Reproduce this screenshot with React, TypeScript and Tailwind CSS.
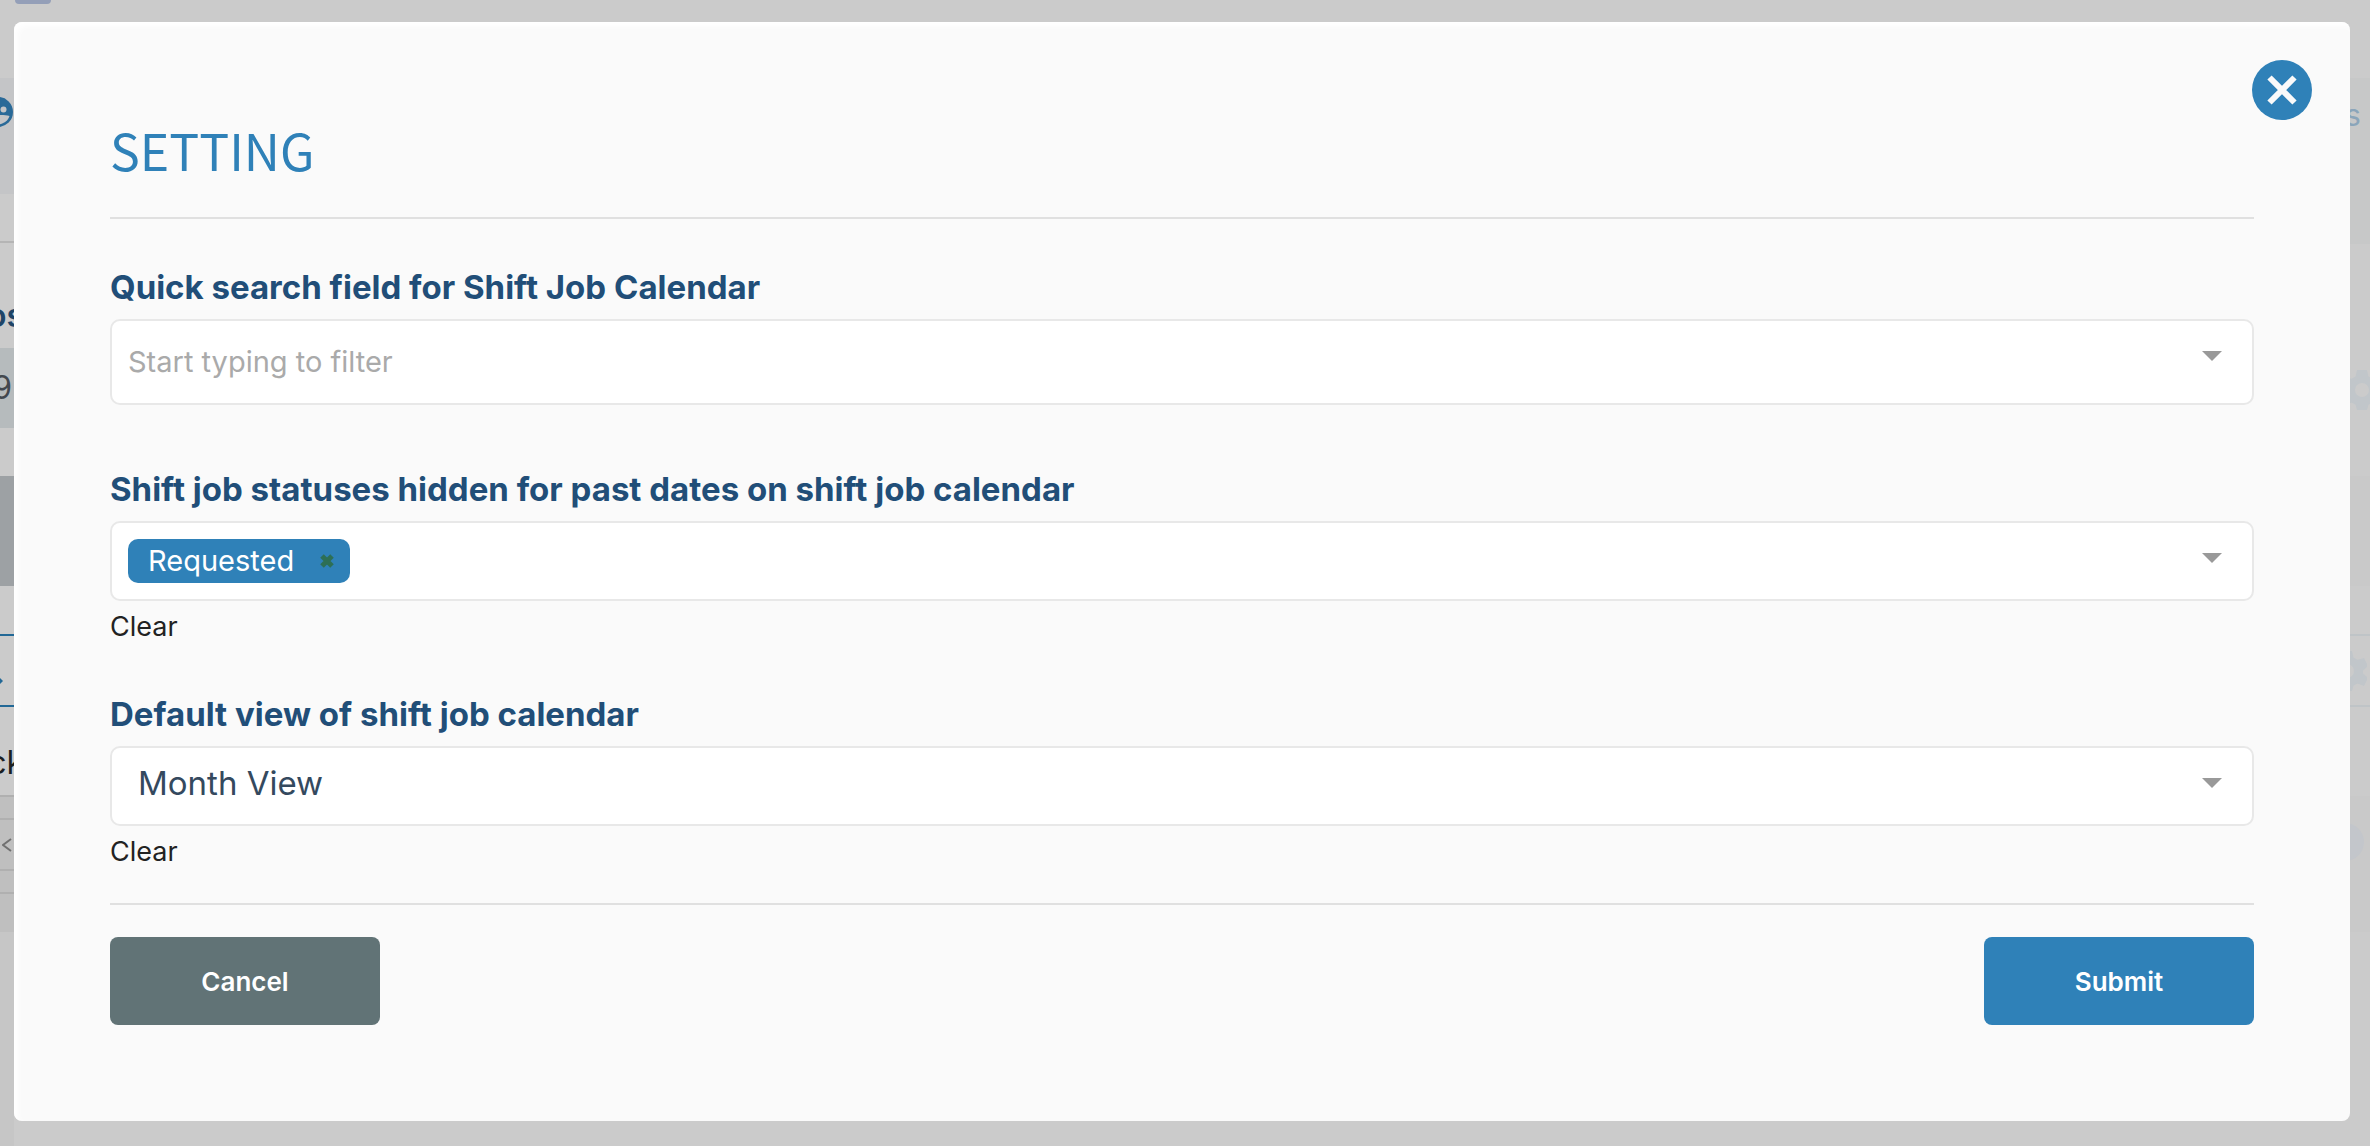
// App.tsx
import { FC, ReactNode, useState } from "react";

const viewOptions = [
  { value: "month", label: "Month View" },
  { value: "week", label: "Week View" },
  { value: "day", label: "Day View" },
];

const Caret: FC = () => (
  <svg className="pointer-events-none h-[10px] w-5 shrink-0 fill-[#999]" viewBox="0 0 20 10" aria-hidden="true">
    <path d="M0 0h20L10 10z" />
  </svg>
);

const Gear: FC<{ className: string }> = ({ className }) => (
  <svg className={className} viewBox="0 0 40 40" aria-hidden="true">
    <path
      fillRule="evenodd"
      d="M15 0h10l1.500 6.500 4 2.300L37 7l4 8-5 4.500v3L41 27l-4 8-6.500-2.500-4 2.300L25 40H15l-1.500-5.200-4-2.300L3 35l-4-8 5-4.500v-3L-1 15l4-8 6.500 1.800 4-2.300zM20 13a7 7 0 1 0 0 14 7 7 0 0 0 0-14z"
    />
  </svg>
);

// The page that stays visible round the dialog
const Backdrop: FC = () => (
  <div className="absolute inset-0 flex justify-between overflow-hidden" aria-hidden="true">
    <div className="flex w-[14px] flex-col">
      <div className="ml-[15px] h-1 w-9 rounded-b-lg bg-[#949fb8]" />
      <div className="mt-[74px] flex h-[116px] items-start bg-[#c4c5c7] pt-[19px]">
        <svg className="-ml-[17px] h-[30px] w-[30px] shrink-0" viewBox="0 0 30 30">
          <circle cx="15" cy="15" r="15" fill="#2a6a98" />
          <circle cx="20.500" cy="12.500" r="3" fill="#c4c5c7" />
          <path d="M9 27c0-6 4-9 9-9 3 0 6 0 8.500 1-1.500 5-6 8-11.500 8.500z" fill="#c4c5c7" />
        </svg>
      </div>
      <div className="mt-[47px] h-[2px] bg-[#b5b5b5]" />
      <div className="mt-[53px] flex h-[40px] w-6 items-center justify-end text-[32px] font-semibold text-[#1f4568]">os</div>
      <div className="mt-[12px] flex h-20 items-center bg-[#b6bbbd]">
        <span className="flex w-3 justify-end text-[32px] text-[#43484f]">9</span>
      </div>
      <div className="mt-12 h-[110px] bg-[#9da1a4]" />
      <div className="mt-12 flex h-[73px] items-center border-y-2 border-[#226896] pt-[20px]">
        <svg className="h-[6px] w-[3px] fill-[#226896]" viewBox="0 0 3 6">
          <path d="M0 0l3 3-3 3z" />
        </svg>
      </div>
      <div className="mt-[36px] flex h-[40px] w-6 items-center justify-end text-[32px] text-[#1c1f22]">ck</div>
      <div className="mt-[12px] border-t-2 border-[#b0b0b0] bg-[#bfbfbf] pt-[21px]">
        <div className="flex h-[53px] items-center border-y-2 border-[#b0b0b0]">
          <svg className="ml-[2px] h-[14px] w-[10px] shrink-0 fill-none stroke-[#707070] stroke-2" viewBox="0 0 10 14">
            <path d="M9 1L1 7l8 6" />
          </svg>
        </div>
        <div className="mt-[21px] h-10 border-t-2 border-[#b0b0b0]" />
      </div>
      <div className="grow bg-[#c6c6c6]" />
    </div>
    <div className="flex w-5 flex-col">
      <div className="mt-[78px] h-[166px] bg-[#c7c8c8] pt-[17px] text-[30px] leading-10 text-[#8aa5ba]">
        <span className="-ml-[5px]">s</span>
      </div>
      <Gear className="-ml-[8px] mt-[126px] h-10 w-10 fill-[#c1c6ca]" />
      <div className="mt-[66px] h-[110px] bg-[#c9c9c9]" />
      <div className="mt-12 flex h-[73px] items-center border-y-2 border-[#bfc4c7]">
        <Gear className="-ml-[23px] h-10 w-10 shrink-0 fill-[#c1c6ca]" />
      </div>
      <div className="mt-[89px] flex h-[136px] items-start bg-[#c9c9c9] pt-[27px]">
        <div className="-ml-[24px] h-[38px] w-[38px] shrink-0 rounded-full bg-[#c3c6cb]" />
      </div>
    </div>
  </div>
);

interface FieldProps {
  id: string;
  label: string;
  children: ReactNode;
  onClear?: () => void;
}

const Field: FC<FieldProps> = ({ id, label, children, onClear }) => (
  <div>
    <label htmlFor={id} className="mb-2 block text-[33px] leading-[48px] font-bold text-[#214e78]">
      {label}
    </label>
    {children}
    {onClear && (
      <button type="button" onClick={onClear} className="mt-2 block text-[27px] leading-9 text-[#222]">
        Clear
      </button>
    )}
  </div>
);

export default function App() {
  const [search, setSearch] = useState("");
  const [statuses, setStatuses] = useState(["Requested"]);
  const [view, setView] = useState("month");

  return (
    <div className="relative min-h-screen bg-[#cbcbcb] pt-[22px] pr-5 pb-[25px] pl-[14px] font-[Inter,sans-serif]">
      <Backdrop />
      <div
        role="dialog"
        aria-labelledby="setting-title"
        className="relative rounded-lg bg-[#fafafa] px-24 pt-[91px] pb-24 shadow-[inset_4px_4px_6px_#fff]"
      >
        <button
          type="button"
          aria-label="Close"
          className="absolute top-[38px] right-[38px] flex size-[60px] items-center justify-center rounded-full bg-[#2f81b8]"
        >
          <svg className="size-[30px] stroke-[#fafafa] stroke-[6]" viewBox="0 0 30 30" aria-hidden="true">
            <path d="M2.500 2.500l25 25M27.500 2.500l-25 25" />
          </svg>
        </button>

        <h2
          id="setting-title"
          className="border-b-2 border-[#e0e0e0] pb-8 font-['Noto_Sans_CJK_SC',sans-serif] text-[50px] leading-[72px] text-[#2f81b8]"
        >
          SETTING
        </h2>

        <form onSubmit={(e) => e.preventDefault()}>
          <div className="flex flex-col gap-[45px] border-b-2 border-[#e0e0e0] pt-11 pb-[33px]">
            <div className="pb-[15px]">
              <Field id="quick-search" label="Quick search field for Shift Job Calendar">
                <div className="flex h-[86px] items-start rounded-[10px] border-2 border-[#e8e8e8] bg-white pr-[30px] pl-4">
                  <input
                    id="quick-search"
                    type="text"
                    value={search}
                    onChange={(e) => setSearch(e.target.value)}
                    placeholder="Start typing to filter"
                    className="h-full min-w-0 grow bg-transparent pb-[2px] text-[29px] text-[#34495e] outline-none placeholder:text-[#aaa]"
                  />
                  <div className="pt-[30px]">
                    <Caret />
                  </div>
                </div>
              </Field>
            </div>

            <Field
              id="hidden-statuses"
              label="Shift job statuses hidden for past dates on shift job calendar"
              onClear={() => setStatuses([])}
            >
              <div className="flex h-20 items-start rounded-[10px] border-2 border-[#e8e8e8] bg-white pr-[30px] pl-4">
                {statuses.map((status) => (
                  <span
                    key={status}
                    className="mt-4 mr-2 flex h-11 items-center rounded-[10px] bg-[#2f81b8] pr-4 pl-5 text-[29px] text-white"
                  >
                    {status}
                    <button
                      type="button"
                      aria-label={`Remove ${status}`}
                      onClick={() => setStatuses(statuses.filter((s) => s !== status))}
                      className="ml-[26px]"
                    >
                      <svg className="size-[14px] stroke-[#2d6f55] stroke-[5]" viewBox="0 0 14 14" aria-hidden="true">
                        <path d="M2 2l10 10M12 2L2 12" />
                      </svg>
                    </button>
                  </span>
                ))}
                <input id="hidden-statuses" type="text" className="h-full min-w-0 grow bg-transparent text-[29px] outline-none" />
                <div className="pt-[30px]">
                  <Caret />
                </div>
              </div>
            </Field>

            <Field id="default-view" label="Default view of shift job calendar" onClear={() => setView("month")}>
              <div className="relative">
                <select
                  id="default-view"
                  value={view}
                  onChange={(e) => setView(e.target.value)}
                  className="block h-20 w-full appearance-none rounded-[10px] border-2 border-[#e8e8e8] bg-white pr-16 pb-1 pl-[26px] text-[33px] text-[#34495e]"
                >
                  {viewOptions.map((option) => (
                    <option key={option.value} value={option.value}>
                      {option.label}
                    </option>
                  ))}
                </select>
                <div className="pointer-events-none absolute top-8 right-8">
                  <Caret />
                </div>
              </div>
            </Field>
          </div>

          <div className="flex justify-between pt-8">
            <button type="button" className="h-[88px] w-[270px] rounded-lg bg-[#617376] text-[26px] font-semibold text-white">
              Cancel
            </button>
            <button type="submit" className="h-[88px] w-[270px] rounded-lg bg-[#2f81b8] text-[26px] font-semibold text-white">
              Submit
            </button>
          </div>
        </form>
      </div>
    </div>
  );
}
